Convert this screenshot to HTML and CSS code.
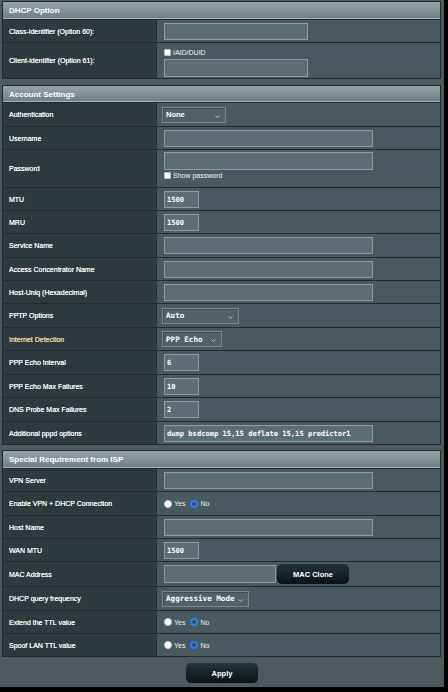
FILE: index.html
```html
<!DOCTYPE html>
<html>
<head>
<meta charset="utf-8">
<link rel="stylesheet" href="styles.css">
</head>
<body>
<div class="page">

  <div class="panel first">
    <div class="hdr h18">DHCP Option</div>
    <div class="row h23">
      <div class="lab">Class-identifier (Option 60):</div>
      <div class="val"><input class="in w144" type="text"></div>
    </div>
    <div class="row h36">
      <div class="lab">Client-identifier (Option 61):</div>
      <div class="val stack-end">
        <label class="chk"><span class="box"></span>IAID/DUID</label>
        <input class="in w144 tall" type="text">
      </div>
    </div>
  </div>

  <div class="panel second">
    <div class="hdr h17">Account Settings</div>
    <div class="row h24">
      <div class="lab">Authentication</div>
      <div class="val"><div class="sel sans w64">None<svg class="chev" width="5" height="3" viewBox="0 0 5 3"><polyline points="0.5,0.5 2.5,2.5 4.5,0.5" fill="none" stroke="#b9c3c6" stroke-width="1"/></svg></div></div>
    </div>
    <div class="row h23">
      <div class="lab">Username</div>
      <div class="val"><input class="in w209" type="text"></div>
    </div>
    <div class="row h38">
      <div class="lab">Password</div>
      <div class="val stack-top">
        <input class="in w209 tall" type="text">
        <label class="chk"><span class="box"></span>Show password</label>
      </div>
    </div>
    <div class="row h23">
      <div class="lab">MTU</div>
      <div class="val"><input class="in w35" type="text" value="1500"></div>
    </div>
    <div class="row h23">
      <div class="lab">MRU</div>
      <div class="val"><input class="in w35" type="text" value="1500"></div>
    </div>
    <div class="row h24">
      <div class="lab">Service Name</div>
      <div class="val"><input class="in w209" type="text"></div>
    </div>
    <div class="row h23">
      <div class="lab">Access Concentrator Name</div>
      <div class="val"><input class="in w209" type="text"></div>
    </div>
    <div class="row h23">
      <div class="lab">Host-Uniq (Hexadecimal)</div>
      <div class="val"><input class="in w209" type="text"></div>
    </div>
    <div class="row h24">
      <div class="lab">PPTP Options</div>
      <div class="val"><div class="sel w77">Auto<svg class="chev" width="5" height="3" viewBox="0 0 5 3"><polyline points="0.5,0.5 2.5,2.5 4.5,0.5" fill="none" stroke="#b9c3c6" stroke-width="1"/></svg></div></div>
    </div>
    <div class="row h23">
      <div class="lab hint">Internet Detection</div>
      <div class="val"><div class="sel w60">PPP Echo<svg class="chev" width="5" height="3" viewBox="0 0 5 3"><polyline points="0.5,0.5 2.5,2.5 4.5,0.5" fill="none" stroke="#b9c3c6" stroke-width="1"/></svg></div></div>
    </div>
    <div class="row h24">
      <div class="lab">PPP Echo Interval</div>
      <div class="val"><input class="in w35" type="text" value="6"></div>
    </div>
    <div class="row h23">
      <div class="lab">PPP Echo Max Failures</div>
      <div class="val"><input class="in w35" type="text" value="10"></div>
    </div>
    <div class="row h24">
      <div class="lab">DNS Probe Max Failures</div>
      <div class="val"><input class="in w35" type="text" value="2"></div>
    </div>
    <div class="row h23">
      <div class="lab">Additional pppd options</div>
      <div class="val"><input class="in w209" type="text" value="dump bsdcomp 15,15 deflate 15,15 predictor1"></div>
    </div>
  </div>

  <div class="panel third">
    <div class="hdr h18">Special Requirement from ISP</div>
    <div class="row h23">
      <div class="lab">VPN Server</div>
      <div class="val"><input class="in w209" type="text"></div>
    </div>
    <div class="row h24">
      <div class="lab">Enable VPN + DHCP Connection</div>
      <div class="val"><div class="radios"><span class="rad"></span><span class="rtxt">Yes</span><span class="rad on"></span><span class="rtxt">No</span></div></div>
    </div>
    <div class="row h23">
      <div class="lab">Host Name</div>
      <div class="val"><input class="in w209" type="text"></div>
    </div>
    <div class="row h23">
      <div class="lab">WAN MTU</div>
      <div class="val"><input class="in w35" type="text" value="1500"></div>
    </div>
    <div class="row h25">
      <div class="lab">MAC Address</div>
      <div class="val"><div class="mac"><input class="in w112 tall" type="text"><button class="btn" type="button">MAC Clone</button></div></div>
    </div>
    <div class="row h24">
      <div class="lab">DHCP query frequency</div>
      <div class="val"><div class="sel w87">Aggressive Mode<svg class="chev" width="5" height="3" viewBox="0 0 5 3"><polyline points="0.5,0.5 2.5,2.5 4.5,0.5" fill="none" stroke="#b9c3c6" stroke-width="1"/></svg></div></div>
    </div>
    <div class="row h23">
      <div class="lab">Extend the TTL value</div>
      <div class="val"><div class="radios"><span class="rad"></span><span class="rtxt">Yes</span><span class="rad on"></span><span class="rtxt">No</span></div></div>
    </div>
    <div class="row h23">
      <div class="lab">Spoof LAN TTL value</div>
      <div class="val"><div class="radios"><span class="rad"></span><span class="rtxt">Yes</span><span class="rad on"></span><span class="rtxt">No</span></div></div>
    </div>
  </div>

  <div class="apply-row"><button class="btn" type="button">Apply</button></div>
</div>
</body>
</html>
```

FILE: styles.css
```css
html, body {
  margin: 0;
  padding: 0;
  background: #000;
}
body {
  font-family: "Liberation Sans", Arial, sans-serif;
  color: #f4f6f6;
}
.page {
  width: 444px;
  height: 687px;
  background: #4e5a5e;
  padding-top: 1px;
  box-sizing: border-box;
  overflow: hidden;
}
.panel {
  margin-left: 2px;
  width: 439px;
  box-sizing: border-box;
  border: 1px solid #23292c;
  border-bottom: none;
}
.panel.second { margin-top: 6px; }
.panel.third { margin-top: 5px; }

.hdr {
  box-sizing: border-box;
  border-bottom: 1px solid #23292c;
  background: linear-gradient(#97a4a9, #6f7e83);
  box-shadow: inset 0 -1px 0 #a6b2b6;
  color: #fff;
  font-weight: bold;
  font-size: 8px;
  padding-left: 6px;
  display: flex;
  align-items: center;
}
.h17 { height: 17px; }
.h18 { height: 18px; }
.h23 { height: 23px; }
.h24 { height: 24px; }
.h25 { height: 25px; }
.h36 { height: 36px; }
.h38 { height: 38px; }

.row {
  display: grid;
  grid-template-columns: 154px 1fr;
  box-sizing: border-box;
  border-bottom: 1px solid #23292c;
}
.lab {
  box-sizing: border-box;
  background: #2f3a3e;
  border-right: 1px solid #262e31;
  padding-left: 6px;
  display: flex;
  align-items: center;
  font-size: 7px;
  color: #fafbfb;
  text-shadow: 0 0 0.4px #fff;
}
.lab.hint { color: #f3d9aa; text-shadow: 0 0 0.4px #f3d9aa; }
.val {
  background: #485a60;
  display: flex;
  flex-direction: column;
  justify-content: center;
  align-items: flex-start;
  padding-left: 7px;
}
.val.stack-end {
  justify-content: flex-end;
  padding-bottom: 1px;
  gap: 3px;
}
.val.stack-top {
  justify-content: flex-start;
  padding-top: 2px;
  gap: 2px;
}

.in {
  box-sizing: border-box;
  height: 17px;
  margin: 0;
  background: #5a6e74;
  border: 1px solid #8d9ca0;
  border-radius: 0;
  color: #fff;
  font-family: "DejaVu Sans Mono", "Liberation Mono", monospace;
  font-weight: bold;
  font-size: 7.1px;
  padding: 0 0 0 2px;
  outline: none;
}
.in.tall { height: 18px; }
.w35 { width: 35px; }
.w112 { width: 112px; }
.w144 { width: 144px; }
.w209 { width: 209px; }

.sel {
  box-sizing: border-box;
  height: 16px;
  margin-left: -2px;
  background: #4f6268;
  border: 1px solid #78888c;
  box-shadow: inset 1px 1px 0 #3d4a4f;
  color: #fff;
  font-family: "DejaVu Sans Mono", "Liberation Mono", monospace;
  font-weight: bold;
  font-size: 7.6px;
  padding-left: 3px;
  display: flex;
  align-items: center;
  position: relative;
}
.sel.sans {
  font-family: "Liberation Sans", Arial, sans-serif;
  font-size: 7.5px;
}
.w60 { width: 60px; }
.w64 { width: 64px; }
.w77 { width: 77px; }
.w87 { width: 87px; }
.chev {
  position: absolute;
  right: 5px;
  top: 7px;
}

.chk {
  display: flex;
  align-items: center;
  gap: 2px;
  font-size: 7px;
  color: #f4f6f6;
}
.box {
  width: 7px;
  height: 7px;
  box-sizing: border-box;
  background: #fff;
  border: 1px solid #b8bcbe;
  border-radius: 1px;
}

.radios {
  display: flex;
  align-items: center;
  font-size: 7px;
  color: #eef1f2;
}
.rad {
  width: 8px;
  height: 8px;
  box-sizing: border-box;
  border-radius: 50%;
  background: #fff;
  border: 1px solid #c9cdce;
}
.rad.on {
  background: #3d4f56;
  border: 2px solid #2a7cf5;
  margin-left: 5px;
}
.rtxt { margin-left: 2px; }

.mac {
  display: flex;
  align-items: center;
  gap: 1px;
}
.btn {
  box-sizing: border-box;
  width: 72px;
  height: 20px;
  margin: 0;
  padding: 0;
  border: none;
  border-radius: 5px;
  background: linear-gradient(#25333a, #0c1215);
  color: #fff;
  font-family: "Liberation Sans", Arial, sans-serif;
  font-weight: bold;
  font-size: 7.5px;
}
.apply-row {
  display: flex;
  justify-content: center;
  margin-top: 6px;
}
```
